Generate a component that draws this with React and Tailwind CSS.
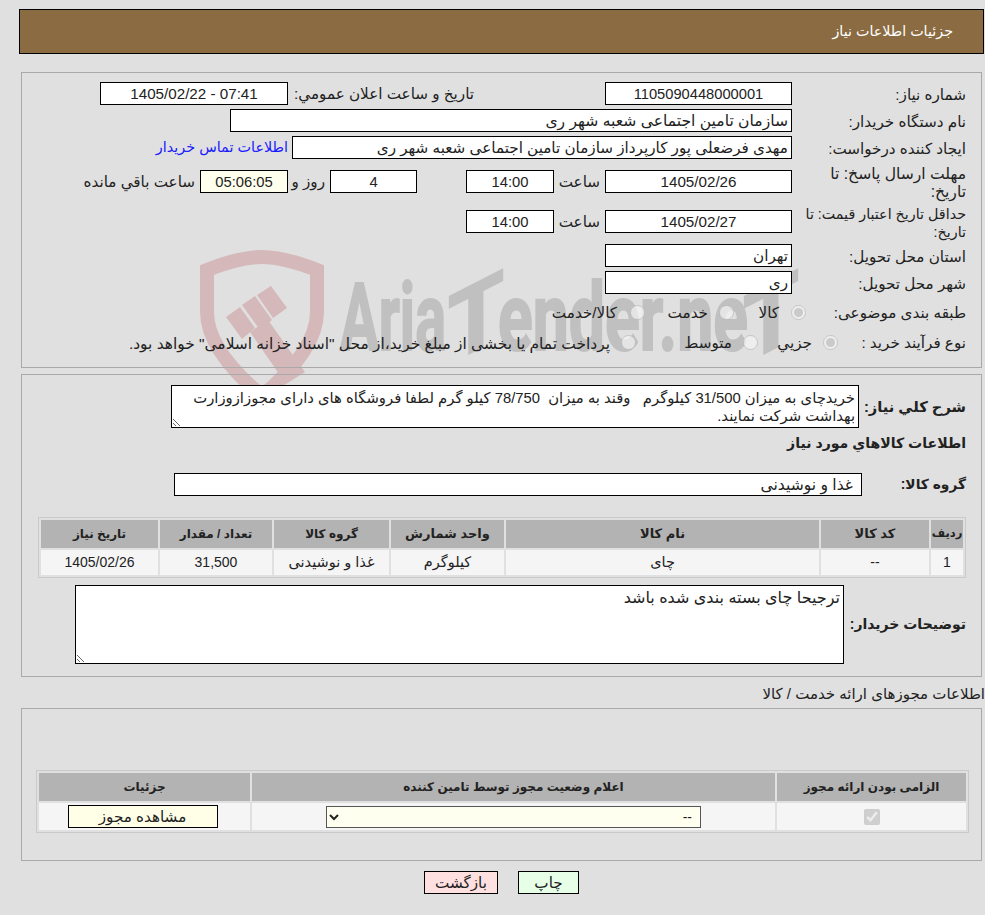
import React from 'react';

const Field = ({ value, className = '', ltr = false }) => (
  <input
    readOnly
    value={value}
    dir={ltr ? 'ltr' : 'rtl'}
    className={`h-[23px] shrink-0 border border-black px-[3px] text-[#222] outline-none ${ltr ? 'text-center' : 'text-right'} ${className}`}
  />
);

const Radio = ({ name, checked }) => (
  <input type="radio" name={name} disabled defaultChecked={checked} className="m-0 h-[15px] w-[15px] shrink-0" />
);

const Label = ({ children, className = '' }) => (
  <div className={`w-[174px] shrink-0 whitespace-nowrap pt-[2px] leading-[18px] text-[#222] ${className}`}>{children}</div>
);

const Watermark = () => (
  <svg dir="ltr" className="absolute left-0 top-0 h-[915px] w-[985px]" viewBox="0 0 985 915" aria-hidden="true">
    <g fill="none" stroke="#d5b8ba" strokeWidth="14">
      <path d="M207 270 Q240 257 262 257 Q284 257 317 270 L317 312 Q317 350 262 396 Q207 350 207 312 Z" />
    </g>
    <g fill="#d5b8ba">
      <polygon points="226,317 240,307 255,328 242,339" />
      <polygon points="242,305 255,296 272,320 260,330" />
      <polygon points="257,295 271,286 287,308 273,318" />
      <polygon points="250,332 268,320 305,372 286,384" />
    </g>
    <g fill="#c0c0c0" stroke="#c0c0c0" strokeWidth="2" fontFamily="Roboto, sans-serif" fontWeight="700" fontSize="94" direction="ltr">
      <text x="340" y="350" textLength="106" lengthAdjust="spacingAndGlyphs">Aria</text>
      <text transform="translate(476,350) skewY(-27)" x="-28" y="0" textLength="56" lengthAdjust="spacingAndGlyphs">T</text>
      <text x="498" y="350" textLength="250" lengthAdjust="spacingAndGlyphs">ender.ne</text>
      <text transform="translate(771,350) skewY(-27)" x="-28" y="0" textLength="56" lengthAdjust="spacingAndGlyphs">T</text>
    </g>
  </svg>
);

const GoodsTable = () => (
  <table className="ml-[16px] w-[928px] table-fixed border-separate border-spacing-[2px] border border-[#cacaca] text-center text-[14.5px] text-[#222]">
    <colgroup>
      <col className="w-[32px]" />
      <col className="w-[108px]" />
      <col className="w-[313px]" />
      <col className="w-[113px]" />
      <col className="w-[115px]" />
      <col className="w-[112px]" />
      <col className="w-[117px]" />
    </colgroup>
    <thead>
      <tr className="h-[28px] bg-[#b3b3b3] text-[12px] font-bold">
        <th className="p-0 text-[11.5px]">ردیف</th>
        <th className="p-0 text-[13px]">کد کالا</th>
        <th className="p-0 text-[13px]">نام کالا</th>
        <th className="p-0 text-[13px]">واحد شمارش</th>
        <th className="p-0">گروه کالا</th>
        <th className="p-0">تعداد / مقدار</th>
        <th className="p-0">تاریخ نیاز</th>
      </tr>
    </thead>
    <tbody>
      <tr className="h-[25px] bg-[#f5f5f5]">
        <td className="p-0 text-[14px]">1</td>
        <td className="p-0 text-[14px]">--</td>
        <td className="p-0">چای</td>
        <td className="p-0">کیلوگرم</td>
        <td className="p-0">غذا و نوشیدنی</td>
        <td className="p-0 text-[14px]">31,500</td>
        <td className="p-0 text-[14px]">1405/02/26</td>
      </tr>
    </tbody>
  </table>
);

const LicenseTable = () => (
  <table className="w-[933px] table-fixed border-separate border-spacing-[2px] border border-[#cacaca] text-center text-[#222]">
    <colgroup>
      <col className="w-[189px]" />
      <col className="w-[523px]" />
      <col className="w-[211px]" />
    </colgroup>
    <thead>
      <tr className="h-[28px] bg-[#b3b3b3] text-[12px] font-bold">
        <th className="p-0">الزامی بودن ارائه مجوز</th>
        <th className="p-0">اعلام وضعیت مجوز توسط تامین کننده</th>
        <th className="p-0">جزئیات</th>
      </tr>
    </thead>
    <tbody>
      <tr className="h-[27px] bg-[#f5f5f5]">
        <td className="p-0">
          <input type="checkbox" disabled defaultChecked className="m-0 h-4 w-4 align-middle" />
        </td>
        <td className="p-0">
          <select defaultValue="--" className="h-[22px] w-[375px] border border-[#555] bg-[#fffff0] px-1 align-middle text-[14px] text-[#222]">
            <option value="--">--</option>
          </select>
        </td>
        <td className="p-0">
          <button className="mr-[4px] h-[23px] w-[150px] border border-black bg-[#ffffe8] align-middle text-[#222]">مشاهده مجوز</button>
        </td>
      </tr>
    </tbody>
  </table>
);

export default function App() {
  return (
    <div dir="rtl" className="relative h-[915px] overflow-hidden bg-[#e0e0e0] font-['Liberation_Sans','DejaVu_Sans',sans-serif] text-[15.2px]">
      <Watermark />
      <div className="relative">
        {/* Header */}
        <div className="ml-[19px] mr-[1px] mt-[9px] flex h-[45px] items-center border border-black bg-[#8b6b41] pr-[30px] text-[14.3px] text-white">
          جزئیات اطلاعات نیاز
        </div>

        {/* Need details */}
        <div className="ml-[21px] mr-[3px] mt-[18px] h-[296px] border border-[#a9a9a9] pr-[15px] pt-[9px]">
          <div className="flex h-[23px] items-center">
            <Label>شماره نیاز:</Label>
            <Field ltr value="1105090448000001" className="w-[187px] bg-white text-[14.7px]" />
            <div className="mr-[131px] w-[186px] shrink-0 whitespace-nowrap pt-[2px] text-[#222]">تاریخ و ساعت اعلان عمومي:</div>
            <Field ltr value="1405/02/22 - 07:41" className="w-[188px] bg-white" />
          </div>
          <div className="mt-[4px] flex h-[23px] items-center">
            <Label>نام دستگاه خریدار:</Label>
            <Field value="سازمان تامین اجتماعی شعبه شهر ری" className="w-[562px] bg-white text-[15.6px]" />
          </div>
          <div className="mt-[4px] flex h-[23px] items-center">
            <Label>ایجاد کننده درخواست:</Label>
            <Field value="مهدی فرضعلی پور کارپرداز سازمان تامین اجتماعی شعبه شهر ری" className="w-[500px] bg-white" />
            <a className="mr-[4px] whitespace-nowrap text-[14.4px] text-[#1a1aff]">اطلاعات تماس خریدار</a>
          </div>
          <div className="mt-[11px] flex h-[23px] items-center">
            <Label className="text-[15.6px]">مهلت ارسال پاسخ: تا<br />تاریخ:</Label>
            <Field ltr value="1405/02/26" className="w-[187px] bg-white" />
            <div className="w-[51px] shrink-0 pr-[5px] pt-[2px] text-[#222]">ساعت</div>
            <Field ltr value="14:00" className="w-[88px] bg-white text-[14.8px]" />
            <div className="w-[49px] shrink-0" />
            <Field ltr value="4" className="w-[87px] bg-white text-[14.8px]" />
            <div className="w-[42px] shrink-0 whitespace-nowrap pr-[5px] pt-[2px] text-[#222]">روز و</div>
            <Field ltr value="05:06:05" className="w-[88px] bg-[#ffffee] text-[14.8px]" />
            <div className="mr-[5px] whitespace-nowrap pt-[2px] text-[#222]">ساعت باقي مانده</div>
          </div>
          <div className="mt-[17px] flex h-[23px] items-center">
            <Label className="text-[14.3px]">حداقل تاریخ اعتبار قیمت: تا<br />تاریخ:</Label>
            <Field ltr value="1405/02/27" className="w-[187px] bg-white" />
            <div className="w-[51px] shrink-0 pr-[5px] pt-[2px] text-[#222]">ساعت</div>
            <Field ltr value="14:00" className="w-[88px] bg-white text-[14.8px]" />
          </div>
          <div className="mt-[11px] flex h-[23px] items-center">
            <Label>استان محل تحویل:</Label>
            <Field value="تهران" className="w-[187px] bg-white" />
          </div>
          <div className="mt-[4px] flex h-[23px] items-center">
            <Label>شهر محل تحویل:</Label>
            <Field value="ری" className="w-[187px] bg-white" />
          </div>
          <div className="mt-[7px] flex h-[23px] items-center">
            <div className="w-[160px] shrink-0 whitespace-nowrap pt-[2px] text-[#222]">طبقه بندی موضوعی:</div>
            <Radio name="cat" checked />
            <span className="mr-[12px] w-[45px] shrink-0 pt-[2px] text-[#222]">کالا</span>
            <Radio name="cat" />
            <span className="mr-[11px] w-[63px] shrink-0 pt-[2px] text-[#222]">خدمت</span>
            <Radio name="cat" />
            <span className="mr-[13px] whitespace-nowrap pt-[2px] text-[#222]">کالا/خدمت</span>
          </div>
          <div className="mt-[7px] flex h-[23px] items-center">
            <div className="w-[128px] shrink-0 pt-[2px] text-[#222]">نوع فرآیند خرید :</div>
            <Radio name="kind" checked />
            <span className="mr-[11px] w-[54px] shrink-0 pt-[2px] text-[#222]">جزيي</span>
            <Radio name="kind" />
            <span className="mr-[11px] w-[96px] shrink-0 pt-[2px] text-[#222]">متوسط</span>
            <Radio name="kind" />
            <span className="mr-[11px] whitespace-nowrap pt-[2px] text-[15.45px] text-[#222]">پرداخت تمام یا بخشی از مبلغ خرید،از محل "اسناد خزانه اسلامی" خواهد بود.</span>
          </div>
        </div>

        {/* Need description and goods */}
        <div className="ml-[21px] mr-[3px] mt-[6px] h-[303px] border border-[#a9a9a9] pr-[15px] pt-[10px]">
          <div className="flex items-center">
            <div className="w-[107px] shrink-0 pt-[2px] text-[14.7px] font-bold text-[#222]">شرح کلي نياز:</div>
            <textarea
              readOnly
              dir="rtl"
              value={'خریدچای به میزان 31/500 کیلوگرم   وقند به میزان  78/750 کیلو گرم لطفا فروشگاه های دارای مجوزازوزارت\nبهداشت شرکت نمایند.'}
              className="h-[43px] w-[688px] border border-black bg-white px-[3px] pt-[3px] text-[14.8px] leading-[18px] text-[#222] outline-none"
            />
          </div>
          <div className="mt-[6px] text-[14.1px] font-bold leading-[18px] text-[#222]">اطلاعات کالاهاي مورد نياز</div>
          <div className="mt-[21px] flex items-center">
            <div className="w-[104px] shrink-0 pt-[2px] text-[13.8px] font-bold text-[#222]">گروه کالا:</div>
            <Field value="غذا و نوشیدنی" className="w-[688px] bg-white pr-[8px] text-[15.6px]" />
          </div>
          <div className="mt-[21px]">
            <GoodsTable />
          </div>
          <div className="mt-[7px] flex items-center">
            <div className="w-[122px] shrink-0 whitespace-nowrap text-[14px] font-bold text-[#222]">توضیحات خریدار:</div>
            <textarea
              readOnly
              dir="rtl"
              value="ترجیحا چای بسته بندی شده باشد"
              className="h-[79px] w-[769px] border border-black bg-white px-[3px] pt-[3px] text-[16px] leading-[18px] text-[#222] outline-none"
            />
          </div>
        </div>

        {/* Licenses */}
        <div className="mt-[8px] h-[23px] whitespace-nowrap text-[15px] leading-[18px] text-[#222]">اطلاعات مجوزهای ارائه خدمت / کالا</div>
        <div className="ml-[21px] mr-[3px] h-[153px] border border-[#a9a9a9] pr-[12px] pt-[61px]">
          <LicenseTable />
        </div>

        {/* Actions */}
        <div className="mt-[10px] flex justify-center gap-[20px] pl-[18px]">
          <button className="h-[23px] w-[61px] border border-black bg-[#e6ffe6] text-[#222]">چاپ</button>
          <button className="h-[23px] w-[74px] border border-black bg-[#ffe0e0] text-[#222]">بازگشت</button>
        </div>
      </div>
    </div>
  );
}
